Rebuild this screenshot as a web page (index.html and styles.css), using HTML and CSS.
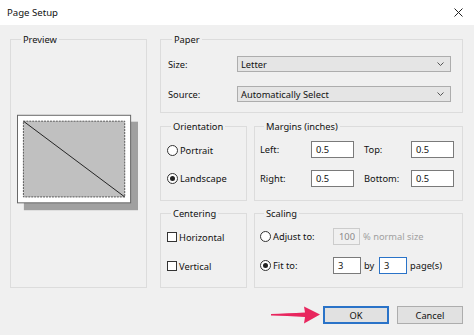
FILE: index.html
```html
<!DOCTYPE html>
<html lang="en">
<head>
    <meta charset="UTF-8">
    <meta name="viewport" content="width=device-width, initial-scale=1.0">
    <title>Page Setup</title>
    <link rel="stylesheet" href="styles.css">
</head>
<body>
    <div class="dialog">
        <div class="titlebar">
            <span class="title">Page Setup</span>
            <svg class="close" width="9" height="9" viewBox="0 0 9 9">
                <path d="M0.5 0.5 L8.5 8.5 M8.5 0.5 L0.5 8.5" stroke="#222" stroke-width="1"/>
            </svg>
        </div>

        <div class="content">
            <fieldset class="group preview">
                <legend>Preview</legend>
                <svg class="page" width="123" height="97" viewBox="0 0 123 97">
                    <rect x="7" y="7" width="116" height="90" fill="#a0a0a0"/>
                    <rect x="0.5" y="0.5" width="115" height="89" fill="#fff" stroke="#666"/>
                    <rect x="6.5" y="6.5" width="103" height="77" fill="#c0c0c0" stroke="#555" stroke-dasharray="2 1"/>
                    <line x1="6.5" y1="6.5" x2="109.5" y2="83.5" stroke="#222" stroke-width="1"/>
                </svg>
            </fieldset>

            <div class="side">
                <fieldset class="group paper">
                    <legend>Paper</legend>
                    <div class="field-row">
                        <span class="label">Size:</span>
                        <div class="combo">Letter
                            <svg width="7" height="4" viewBox="0 0 7 4"><path d="M0.5 0.5 L3.5 3.5 L6.5 0.5" fill="none" stroke="#555"/></svg>
                        </div>
                    </div>
                    <div class="field-row">
                        <span class="label">Source:</span>
                        <div class="combo">Automatically Select
                            <svg width="7" height="4" viewBox="0 0 7 4"><path d="M0.5 0.5 L3.5 3.5 L6.5 0.5" fill="none" stroke="#555"/></svg>
                        </div>
                    </div>
                </fieldset>

                <div class="pair">
                    <fieldset class="group narrow">
                        <legend>Orientation</legend>
                        <div class="option"><span class="radio"></span>Portrait</div>
                        <div class="option"><span class="radio checked"></span>Landscape</div>
                    </fieldset>

                    <fieldset class="group wide">
                        <legend>Margins (inches)</legend>
                        <div class="margins">
                            <span>Left:</span><div class="textbox">0.5</div>
                            <span class="second">Top:</span><div class="textbox">0.5</div>
                            <span>Right:</span><div class="textbox">0.5</div>
                            <span class="second">Bottom:</span><div class="textbox">0.5</div>
                        </div>
                    </fieldset>
                </div>

                <div class="pair">
                    <fieldset class="group narrow">
                        <legend>Centering</legend>
                        <div class="option check-option"><span class="checkbox"></span>Horizontal</div>
                        <div class="option check-option"><span class="checkbox"></span>Vertical</div>
                    </fieldset>

                    <fieldset class="group wide">
                        <legend>Scaling</legend>
                        <div class="scale-row">
                            <div class="option scale-label"><span class="radio"></span>Adjust to:</div>
                            <div class="textbox disabled pct">100</div>
                            <span class="muted">% normal size</span>
                        </div>
                        <div class="scale-row">
                            <div class="option scale-label"><span class="radio checked"></span>Fit to:</div>
                            <div class="textbox small">3</div>
                            <span class="by">by</span>
                            <div class="textbox small focused">3</div>
                            <span class="pages">page(s)</span>
                        </div>
                    </fieldset>
                </div>
            </div>

            <div class="buttons">
                <svg class="arrow" width="50" height="20" viewBox="0 0 50 20">
                    <path d="M0 9 C10 8.5 22 8 34 7.5 L33 1.5 L49 9.5 L33 18.5 L34 12 C22 11.5 10 10.5 0 10.5 Z" fill="#e8265e"/>
                </svg>
                <button class="default">OK</button>
                <button>Cancel</button>
            </div>
        </div>
    </div>
</body>
</html>
```

FILE: styles.css
```css
* {
    box-sizing: border-box;
}

body {
    margin: 0;
    background: #f0f0f0;
    font-family: "Noto Sans", "Open Sans", sans-serif;
    font-size: 9.3px;
    color: #111;
}

.dialog {
    width: 474px;
    height: 335px;
    overflow: hidden;
}

.titlebar {
    height: 25px;
    background: #fff;
    display: flex;
    align-items: center;
    justify-content: space-between;
    padding: 0 11px 0 7px;
}

.title {
    font-size: 9.6px;
}

.content {
    display: grid;
    grid-template-columns: 137px 303px;
    column-gap: 13px;
    padding: 8px 0 0 10px;
}

.group {
    margin: 0;
    border: 1px solid #dcdcdc;
    padding: 0 6px;
    min-width: 0;
}

.group legend {
    line-height: 13px;
    padding: 0 2px;
    margin-left: 4px;
}

.preview {
    height: 255px;
    display: flex;
    align-items: center;
    justify-content: center;
}

.preview .page {
    display: block;
    margin: 0 2px 8px 0;
}

.side {
    display: flex;
    flex-direction: column;
}

.paper {
    height: 80px;
    padding: 10px 11px 0 7px;
}

.field-row {
    display: flex;
    align-items: center;
    margin-bottom: 14px;
}

.label {
    width: 69px;
}

.combo {
    flex: 1;
    height: 16px;
    background: #e5e5e5;
    border: 1px solid #adadad;
    display: flex;
    align-items: center;
    justify-content: space-between;
    padding: 0 6px 0 3px;
}

.pair {
    display: flex;
    gap: 7px;
    margin-top: 7px;
}

.pair + .pair {
    margin-top: 6px;
}

.narrow {
    width: 87px;
    height: 81px;
    padding: 10px 6px 0 6px;
}

.wide {
    width: 209px;
    height: 81px;
    padding: 8px 8px 0 5px;
}

.option {
    display: flex;
    align-items: center;
    height: 14px;
    margin-bottom: 14px;
    white-space: nowrap;
}

.radio {
    width: 11px;
    height: 11px;
    border: 1px solid #333;
    border-radius: 50%;
    background: #fff;
    margin-right: 2px;
    display: flex;
    align-items: center;
    justify-content: center;
}

.radio.checked::after {
    content: "";
    width: 5px;
    height: 5px;
    border-radius: 50%;
    background: #222;
}

.checkbox {
    width: 10px;
    height: 10px;
    border: 1px solid #333;
    background: #fff;
    margin-right: 2px;
}

.check-option {
    margin-bottom: 15px;
}

.margins {
    display: grid;
    grid-template-columns: 51px 43px 57px 43px;
    row-gap: 12px;
    align-items: center;
}

.margins .second {
    margin-left: 10px;
}

.textbox {
    height: 17px;
    background: #fff;
    border: 1px solid #7a7a7a;
    padding: 0 4px;
    line-height: 15px;
}

.textbox.disabled {
    background: #f0f0f0;
    border-color: #cccccc;
    color: #8a8a8a;
    text-align: right;
}

.textbox.focused {
    border-color: #2a73c8;
}

.scale-row {
    display: flex;
    align-items: center;
    height: 17px;
    margin-bottom: 12px;
}

.scale-label {
    width: 73px;
    margin-bottom: 0;
}

.pct {
    width: 27px;
}

.muted {
    color: #a0a0a0;
    margin-left: 3px;
}

.small {
    width: 28px;
}

.by {
    width: 15px;
    margin-left: 3px;
}

.pages {
    margin-left: 3px;
}

.buttons {
    grid-column: 1 / 3;
    display: flex;
    justify-content: flex-end;
    align-items: center;
    gap: 8px;
    margin-top: 17px;
}

.arrow {
    margin-right: -6px;
}

button {
    width: 66px;
    height: 18px;
    background: #e1e1e1;
    border: 1px solid #adadad;
    font-family: inherit;
    font-size: 9.3px;
    color: #111;
    padding: 0;
}

button.default {
    border: 2px solid #2a73c8;
}
```
